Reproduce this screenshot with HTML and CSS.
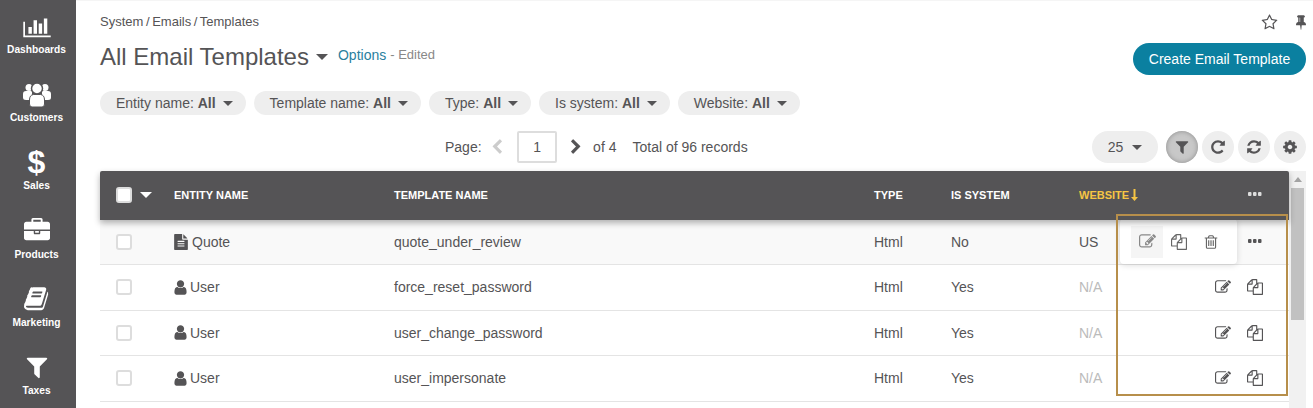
FILE: index.html
```html
<!DOCTYPE html>
<html lang="en">
<head>
<meta charset="utf-8">
<title>All Email Templates</title>
<link rel="stylesheet" href="styles.css">
</head>
<body>
<svg class="defs" aria-hidden="true">
  <symbol id="i-bars" viewBox="0 0 2048 1792"><path d="M640 896v512h-256v-512h256zm384-512v1024h-256v-1024h256zm1024 1152v128h-2048v-1152h128v1024h1920zm-640-896v768h-256v-768h256zm384-384v1152h-256v-1152h256z"/></symbol>
  <symbol id="i-case" viewBox="0 0 1792 1792"><path d="M640 256h512v-128h-512v128zm1152 640v480q0 66-47 113t-113 47h-1472q-66 0-113-47t-47-113v-480h672v160q0 26 19 45t45 19h320q26 0 45-19t19-45v-160h672zm-768 0v128h-256v-128h256zm768-480v384h-1792v-384q0-66 47-113t113-47h352v-160q0-40 28-68t68-28h576q40 0 68 28t28 68v160h352q66 0 113 47t47 113z"/></symbol>
  <symbol id="i-book" viewBox="0 0 1792 1792"><path d="M1639 478q40 57 18 129l-275 906q-19 64-76.500 107.500t-122.500 43.500h-923q-77 0-148.500-53.500t-99.500-131.500q-24-67-2-127 0-4 3-27t4-37q1-8-3-21.500t-3-19.500q2-11 8-21t16.500-23.500 16.500-23.500q23-38 45-91.500t30-91.500q3-10 .5-30t-.5-28q3-11 17-28t17-23q21-36 42-92t25-90q1-9-2.500-32t.5-28q4-13 22-30.500t22-22.500q19-26 42.500-84.500t27.500-96.500q1-8-3-25.500t-2-26.500q2-8 9-18t18-23 17-21q8-12 16.500-35.500t15-44.500 17-46 20.500-41.500 28-30 40-13 55 8.500l-1 3q45-10 61-10h761q74 0 114 56t18 130l-274 906q-36 119-71.500 153.500t-128.500 34.500h-869q-27 0-38 15-11 16-1 43 24 70 144 70h923q29 0 56-15.500t35-41.500l300-987q7-22 5-57 38 15 59 43zm-1064 2q-4 13 2 22.500t20 9.500h608q13 0 25.500-9.500t16.500-22.500l21-64q4-13-2-22.500t-20-9.500h-608q-13 0-25.500 9.500t-16.500 22.500zm-83 256q-4 13 2 22.500t20 9.500h608q13 0 25.500-9.500t16.500-22.500l21-64q4-13-2-22.500t-20-9.500h-608q-13 0-25.500 9.500t-16.500 22.500z"/></symbol>
  <symbol id="i-filter" viewBox="0 0 1792 1792"><path d="M1595 295q17 41-14 70l-493 493v742q0 42-39 59-13 5-25 5-27 0-45-19l-256-256q-19-19-19-45v-486l-493-493q-31-29-14-70 17-39 59-39h1280q42 0 59 39z"/></symbol>
  <symbol id="i-star" viewBox="0 0 1792 1792"><path d="M1201 1004l306-297-422-62-189-382-189 382-422 62 306 297-73 421 378-199 377 199zm527-357q0 22-26 48l-363 354 86 500q1 7 1 20 0 50-41 50-19 0-40-12l-449-236-449 236q-22 12-40 12-21 0-31.500-14.500t-10.500-35.500q0-6 2-20l86-500-364-354q-25-27-25-48 0-37 56-46l502-73 225-455q19-41 49-41t49 41l225 455 502 73q56 9 56 46z"/></symbol>
  <symbol id="i-pin" viewBox="0 0 1152 1792"><path d="M480 864v-448q0-14-9-23t-23-9-23 9-9 23v448q0 14 9 23t23 9 23-9 9-23zm672 352q0 26-19 45t-45 19h-429l-51 483q-2 12-10.500 20.500t-20.500 8.500h-1q-27 0-32-27l-76-485h-404q-26 0-45-19t-19-45q0-123 78.500-221.500t177.500-98.500v-512q-52 0-90-38t-38-90 38-90 90-38h640q52 0 90 38t38 90-38 90-90 38v512q99 0 177.500 98.500t78.500 221.500z"/></symbol>
  <symbol id="i-left" viewBox="0 0 1792 1792"><path d="M1427 301l-531 531 531 531q19 19 19 45t-19 45l-166 166q-19 19-45 19t-45-19l-742-742q-19-19-19-45t19-45l742-742q19-19 45-19t45 19l166 166q19 19 19 45t-19 45z"/></symbol>
  <symbol id="i-right" viewBox="0 0 1792 1792"><path d="M1363 877l-742 742q-19 19-45 19t-45-19l-166-166q-19-19-19-45t19-45l531-531-531-531q-19-19-19-45t19-45l166-166q19-19 45-19t45 19l742 742q19 19 19 45t-19 45z"/></symbol>
  <symbol id="i-repeat" viewBox="0 0 1792 1792"><path d="M1664 256v448q0 26-19 45t-45 19h-448q-42 0-59-40-17-39 14-69l138-138q-148-137-349-137-104 0-198.500 40.500t-163.500 109.500-109.500 163.500-40.500 198.500 40.500 198.500 109.500 163.500 163.500 109.500 198.500 40.500q119 0 225-52t179-147q7-10 23-12 15 0 25 9l137 138q9 8 9.500 20.500t-7.500 22.500q-109 132-264 204.500t-327 72.500q-156 0-298-61t-245-164-164-245-61-298 61-298 164-245 245-164 298-61q147 0 284.500 55.500t244.500 156.500l130-129q29-31 70-14 39 17 39 59z"/></symbol>
  <symbol id="i-refresh" viewBox="0 0 1792 1792"><path d="M1639 1056q0 5-1 7-64 268-268 434.500t-478 166.500q-146 0-282.500-55t-243.500-157l-129 129q-19 19-45 19t-45-19-19-45v-448q0-26 19-45t45-19h448q26 0 45 19t19 45-19 45l-137 137q71 66 161 102t187 36q134 0 250-65t186-179q11-17 53-117 8-23 30-23h192q13 0 22.500 9.500t9.500 22.500zm25-800v448q0 26-19 45t-45 19h-448q-26 0-45-19t-19-45 19-45l138-138q-148-137-349-137-134 0-250 65t-186 179q-11 17-53 117-8 23-30 23h-199q-13 0-22.500-9.500t-9.500-22.500v-7q65-268 270-434.500t480-166.500q146 0 284 55.500t245 156.500l130-129q19-19 45-19t45 19 19 45z"/></symbol>
  <symbol id="i-cog" viewBox="0 0 1792 1792"><path d="M1152 896q0-106-75-181t-181-75-181 75-75 181 75 181 181 75 181-75 75-181zm512-109v222q0 12-8 23t-20 13l-185 28q-19 54-39 91 35 50 107 138 10 12 10 25t-9 23q-27 37-99 108t-94 71q-12 0-26-9l-138-108q-44 23-91 38-16 136-29 186-7 28-36 28h-222q-14 0-24.500-8.500t-11.500-21.500l-28-184q-49-16-90-37l-141 107q-10 9-25 9-14 0-25-11-126-114-165-168-7-10-7-23 0-12 8-23 15-21 51-66.500t54-70.500q-27-50-41-99l-183-27q-13-2-21-12.500t-8-23.500v-222q0-12 8-23t19-13l186-28q14-46 39-92-40-57-107-138-10-12-10-24 0-10 9-23 26-36 98.500-107.500t94.500-71.500q13 0 26 10l138 107q44-23 91-38 16-136 29-186 7-28 36-28h222q14 0 24.500 8.500t11.500 21.500l28 184q49 16 90 37l142-107q9-9 24-9 13 0 25 10 129 119 165 170 7 8 7 22 0 12-8 23-15 21-51 66.500t-54 70.500q26 50 41 98l183 28q13 2 21 12.500t8 23.500z"/></symbol>
  <symbol id="i-edit" viewBox="0 0 1792 1792"><path d="M888 1184l116-116-152-152-116 116v56h96v96h56zm440-720q-16-16-33 1l-350 350q-17 17-1 33t33-1l350-350q17-17 1-33zm80 594v190q0 119-84.500 203.500t-203.500 84.500h-832q-119 0-203.500-84.500t-84.500-203.500v-832q0-119 84.500-203.500t203.500-84.500h832q63 0 117 25 15 7 18 23 3 17-9 29l-49 49q-14 14-32 8-23-6-45-6h-832q-66 0-113 47t-47 113v832q0 66 47 113t113 47h832q66 0 113-47t47-113v-126q0-13 9-22l64-64q15-15 35-7t20 29zm-96-738l288 288-672 672h-288v-288zm444 132l-92 92-288-288 92-92q28-28 68-28t68 28l152 152q28 28 28 68t-28 68z"/></symbol>
  <symbol id="i-copy" viewBox="0 0 1792 1792"><path d="M1696 384q40 0 68 28t28 68v1216q0 40-28 68t-68 28h-960q-40 0-68-28t-28-68v-288h-544q-40 0-68-28t-28-68v-672q0-40 20-88t48-76l408-408q28-28 76-48t88-20h416q40 0 68 28t28 68v328q68-40 128-40h416zm-544 213l-299 299h299v-299zm-640-384l-299 299h299v-299zm196 647l316-316v-416h-384v416q0 40-28 68t-68 28h-416v640h512v-256q0-40 20-88t48-76zm956 804v-1152h-384v416q0 40-28 68t-68 28h-416v640h896z"/></symbol>
  <symbol id="i-trash" viewBox="0 0 1792 1792"><path d="M704 736v576q0 14-9 23t-23 9h-64q-14 0-23-9t-9-23v-576q0-14 9-23t23-9h64q14 0 23 9t9 23zm256 0v576q0 14-9 23t-23 9h-64q-14 0-23-9t-9-23v-576q0-14 9-23t23-9h64q14 0 23 9t9 23zm256 0v576q0 14-9 23t-23 9h-64q-14 0-23-9t-9-23v-576q0-14 9-23t23-9h64q14 0 23 9t9 23zm128 724v-948h-896v948q0 22 7 40.500t14.500 27 10.500 8.500h832q3 0 10.500-8.500t14.500-27 7-40.500zm-672-1076h448l-48-117q-7-9-17-11h-317q-10 2-17 11zm928 32v64q0 14-9 23t-23 9h-96v948q0 83-47 143.500t-113 60.500h-832q-66 0-113-58.500t-47-141.500v-952h-96q-14 0-23-9t-9-23v-64q0-14 9-23t23-9h309l70-167q15-37 54-63t79-26h320q40 0 79 26t54 63l70 167h309q14 0 23 9t9 23z"/></symbol>
  <symbol id="i-user" viewBox="0 0 1792 1792"><path d="M1536 1399q0 109-62.500 187t-150.500 78h-854q-88 0-150.500-78t-62.500-187q0-85 8.500-160.500t31.500-152 58.500-131 94-89 134.500-34.500q131 128 313 128t313-128q76 0 134.500 34.500t94 89 58.500 131 31.500 152 8.500 160.500zm-256-887q0 159-112.500 271.500t-271.500 112.500-271.500-112.500-112.500-271.500 112.500-271.500 271.500-112.500 271.500 112.500 112.500 271.500z"/></symbol>
  <symbol id="i-file" viewBox="0 0 1792 1792"><path d="M1596 476q14 14 28 36h-472v-472q22 14 36 28zm-476 164h544v1056q0 40-28 68t-68 28h-1344q-40 0-68-28t-28-68v-1600q0-40 28-68t68-28h800v544q0 40 28 68t68 28zm160 736v-64q0-14-9-23t-23-9h-704q-14 0-23 9t-9 23v64q0 14 9 23t23 9h704q14 0 23-9t9-23zm0-256v-64q0-14-9-23t-23-9h-704q-14 0-23 9t-9 23v64q0 14 9 23t23 9h704q14 0 23-9t9-23zm0-256v-64q0-14-9-23t-23-9h-704q-14 0-23 9t-9 23v64q0 14 9 23t23 9h704q14 0 23-9t9-23z"/></symbol>
  <symbol id="i-people" viewBox="0 0 28 25"><circle cx="6" cy="5.500" r="3.500"/><circle cx="22" cy="5.500" r="3.500"/><path d="M0 12q0-3 3-3h6v6l-2 3H3q-3 0-3-2.500zM28 12q0-3-3-3h-6v6l2 3h4q3 0 3-2.500z"/><circle cx="14" cy="6.500" r="5.500" stroke="#555456" stroke-width="1.500"/><path d="M6.500 22v-4q0-5 4-5.500h7q4 .5 4 5.500v4q0 3-2.500 3h-10q-2.500 0-2.500-3z" stroke="#555456" stroke-width="1"/></symbol>
  <symbol id="i-caret" viewBox="0 0 10 5"><path d="M0 0h10L5 5z"/></symbol>
  <symbol id="i-dots" viewBox="0 0 14 4"><rect x="0" y="0" width="3.500" height="4" rx="1"/><rect x="5" y="0" width="3.500" height="4" rx="1"/><rect x="10" y="0" width="3.500" height="4" rx="1"/></symbol>
  <symbol id="i-sort" viewBox="0 0 7 12"><path d="M2.500 0h2v8H7l-3.500 4L0 8h2.500z"/></symbol>
</svg>

<div class="app">
  <nav class="sidebar">
    <a class="nav-item"><svg class="nav-ico bars"><use href="#i-bars"/></svg><span>Dashboards</span></a>
    <a class="nav-item"><svg class="nav-ico people"><use href="#i-people"/></svg><span>Customers</span></a>
    <a class="nav-item"><span class="dollar">$</span><span>Sales</span></a>
    <a class="nav-item"><svg class="nav-ico"><use href="#i-case"/></svg><span>Products</span></a>
    <a class="nav-item"><svg class="nav-ico"><use href="#i-book"/></svg><span>Marketing</span></a>
    <a class="nav-item"><svg class="nav-ico"><use href="#i-filter"/></svg><span>Taxes</span></a>
  </nav>

  <main class="main">
    <div class="crumb-row">
      <div class="crumbs">System / Emails / Templates</div>
      <div class="page-tools">
        <svg class="star"><use href="#i-star"/></svg>
        <svg class="pin"><use href="#i-pin"/></svg>
      </div>
    </div>

    <div class="title-row">
      <h1 class="title">All Email Templates</h1>
      <svg class="caret title-caret"><use href="#i-caret"/></svg>
      <a class="options">Options</a>
      <span class="edited">- Edited</span>
      <button class="create">Create Email Template</button>
    </div>

    <div class="filters">
      <div class="pill">Entity name: <b>All</b><svg class="caret"><use href="#i-caret"/></svg></div>
      <div class="pill">Template name: <b>All</b><svg class="caret"><use href="#i-caret"/></svg></div>
      <div class="pill">Type: <b>All</b><svg class="caret"><use href="#i-caret"/></svg></div>
      <div class="pill">Is system: <b>All</b><svg class="caret"><use href="#i-caret"/></svg></div>
      <div class="pill">Website: <b>All</b><svg class="caret"><use href="#i-caret"/></svg></div>
    </div>

    <div class="toolbar">
      <div class="pager">
        <span class="page-label">Page:</span>
        <svg class="chev off"><use href="#i-left"/></svg>
        <div class="page-input">1</div>
        <svg class="chev"><use href="#i-right"/></svg>
        <span class="of">of 4</span>
        <span class="total">Total of 96 records</span>
      </div>
      <div class="tools">
        <div class="per-page">25<svg class="caret"><use href="#i-caret"/></svg></div>
        <button class="round active"><svg><use href="#i-filter"/></svg></button>
        <button class="round"><svg><use href="#i-repeat"/></svg></button>
        <button class="round"><svg><use href="#i-refresh"/></svg></button>
        <button class="round"><svg><use href="#i-cog"/></svg></button>
      </div>
    </div>

    <div class="grid-wrap">
      <div class="grid">
        <div class="row head">
          <div class="cell sel"><span class="check head-check"></span><svg class="caret white"><use href="#i-caret"/></svg></div>
          <div class="cell">Entity name</div>
          <div class="cell">Template name</div>
          <div class="cell">Type</div>
          <div class="cell">Is system</div>
          <div class="cell sorted">Website<svg class="sort"><use href="#i-sort"/></svg></div>
          <div class="cell acts"><svg class="dots"><use href="#i-dots"/></svg></div>
        </div>

        <div class="row first">
          <div class="cell sel"><span class="check"></span></div>
          <div class="cell"><svg class="ent file"><use href="#i-file"/></svg>Quote</div>
          <div class="cell">quote_under_review</div>
          <div class="cell">Html</div>
          <div class="cell">No</div>
          <div class="cell">US</div>
          <div class="cell acts">
            <svg class="dots"><use href="#i-dots"/></svg>
            <div class="popover">
              <span class="pop-btn hover"><svg><use href="#i-edit"/></svg></span>
              <span class="pop-btn"><svg><use href="#i-copy"/></svg></span>
              <span class="pop-btn"><svg><use href="#i-trash"/></svg></span>
            </div>
          </div>
        </div>

        <div class="row">
          <div class="cell sel"><span class="check"></span></div>
          <div class="cell"><svg class="ent"><use href="#i-user"/></svg>User</div>
          <div class="cell">force_reset_password</div>
          <div class="cell">Html</div>
          <div class="cell">Yes</div>
          <div class="cell na">N/A</div>
          <div class="cell acts"><svg class="act"><use href="#i-edit"/></svg><svg class="act"><use href="#i-copy"/></svg></div>
        </div>

        <div class="row">
          <div class="cell sel"><span class="check"></span></div>
          <div class="cell"><svg class="ent"><use href="#i-user"/></svg>User</div>
          <div class="cell">user_change_password</div>
          <div class="cell">Html</div>
          <div class="cell">Yes</div>
          <div class="cell na">N/A</div>
          <div class="cell acts"><svg class="act"><use href="#i-edit"/></svg><svg class="act"><use href="#i-copy"/></svg></div>
        </div>

        <div class="row">
          <div class="cell sel"><span class="check"></span></div>
          <div class="cell"><svg class="ent"><use href="#i-user"/></svg>User</div>
          <div class="cell">user_impersonate</div>
          <div class="cell">Html</div>
          <div class="cell">Yes</div>
          <div class="cell na">N/A</div>
          <div class="cell acts"><svg class="act"><use href="#i-edit"/></svg><svg class="act"><use href="#i-copy"/></svg></div>
        </div>

        <div class="frame"></div>
      </div>
      <div class="scrollbar"><span class="scroll-up"></span><span class="thumb"></span></div>
    </div>
  </main>
</div>
</body>
</html>
```
FILE: styles.css
```css
* { box-sizing: border-box; }

html, body {
  margin: 0;
  height: 100%;
  overflow: hidden;
  background: #fff;
  color: #555456;
  font: 14px/20px "Liberation Sans", Arial, sans-serif;
}

.defs { display: none; }

svg { fill: currentColor; display: block; }

.app { display: flex; height: 408px; }

/* sidebar */
.sidebar {
  width: 76px;
  flex: none;
  padding-right: 3px;
  background: #555456;
  color: #fff;
  overflow: hidden;
}
.nav-item {
  height: 68.2px;
  display: flex;
  flex-direction: column;
  align-items: center;
  justify-content: flex-end;
  padding-bottom: 11px;
  font-size: 10.2px;
  line-height: 14px;
  font-weight: bold;
  gap: 4px;
}
.nav-item:first-child { height: 68px; }
.nav-ico { width: 26px; height: 26px; }
.nav-ico.bars { width: 28px; height: 24px; }
.nav-ico.people { width: 28px; height: 25px; }
.dollar { font-size: 32px; line-height: 26px; height: 26px; font-weight: bold; }

/* main */
.main { flex: 1; min-width: 0; padding: 12px 7px 0 24px; box-shadow: inset 0 1px 0 #f5f5f5; }

.crumb-row { display: flex; justify-content: space-between; height: 20px; }
.crumbs { font-size: 13px; word-spacing: -1px; }
.page-tools { display: flex; align-items: center; gap: 18px; }
.star { width: 17px; height: 17px; }
.pin { width: 10px; height: 16px; color: #555456; }

.title-row { display: flex; align-items: center; height: 32px; margin-top: 9px; position: relative; }
.title { margin: 0; font-size: 24px; line-height: 32px; font-weight: normal; }
.caret { width: 10px; height: 5px; flex: none; }
.title-caret { width: 12px; height: 6px; margin: 0 10px 0 7px; }
.options { color: #2a7f9e; margin-top: -4px; }
.edited { color: #888; margin: -4px 0 0 4px; font-size: 13px; }
.create {
  margin: 4px 0 0 auto;
  width: 173px;
  height: 32px;
  border: 0;
  border-radius: 16px;
  background: #0b80a0;
  color: #fff;
  font: 14px "Liberation Sans", Arial, sans-serif;
}

.filters { display: flex; gap: 8px; margin-top: 18px; }
.pill {
  display: flex;
  align-items: center;
  height: 24px;
  padding: 0 13px 0 16px;
  border-radius: 12px;
  background: #eee;
  white-space: pre;
}
.pill b { margin-right: 7px; }

.toolbar { display: flex; align-items: center; height: 32px; margin-top: 16px; }
.pager { display: flex; align-items: center; margin-left: 345px; }
.chev { width: 16px; height: 16px; margin: 0 9px 0 11px; color: #555456; }
.chev.off { color: #ccc; margin: 0 12.5px 0 7px; }
.page-input {
  width: 40px;
  height: 32px;
  border: 2px solid #ddd;
  border-radius: 2px;
  display: flex;
  align-items: center;
  justify-content: center;
}
.of { margin-right: 16px; }
.tools { display: flex; align-items: center; gap: 4px; margin-left: auto; }
.per-page {
  width: 66px;
  height: 32px;
  border-radius: 16px;
  background: #eee;
  display: flex;
  align-items: center;
  justify-content: center;
  gap: 9px;
  margin-right: 4px;
}
.round {
  width: 32px;
  height: 32px;
  padding: 0;
  border: 0;
  border-radius: 50%;
  background: #eee;
  color: #555456;
  display: flex;
  align-items: center;
  justify-content: center;
}
.round svg { width: 16px; height: 16px; }
.round.active { background: #c8c8c8; box-shadow: inset 0 0 5px #8d8d8d; }

/* grid */
.grid-wrap { display: flex; margin-top: 8px; }
.grid { position: relative; flex: 1; min-width: 0; }
.row {
  display: grid;
  grid-template-columns: 74px 220px 480px 77px 128px 94px 116px;
  align-items: center;
  height: 45.5px;
  border-bottom: 1px solid #e4e4e4;
}
.cell { display: flex; align-items: center; white-space: nowrap; }
.row.first { background: #f9f9f9; height: 45px; }
.head {
  height: 49px;
  padding-bottom: 2px;
  background: #555456;
  color: #fff;
  border: 0;
  border-radius: 2px 2px 0 0;
  font-size: 11px;
  font-weight: bold;
  text-transform: uppercase;
  position: relative;
  z-index: 2;
  box-shadow: 0 3px 6px rgba(0, 0, 0, .3);
}
.sel { padding-left: 16px; gap: 8px; }
.sel .caret { width: 12px; height: 6px; }
.check {
  width: 16px;
  height: 16px;
  background: #fff;
  border: 2px solid #ddd;
  border-radius: 3px;
}
.white { color: #fff; }
.sorted { color: #f6c544; gap: 2px; }
.sort { width: 7px; height: 12px; }
.acts { position: relative; justify-content: flex-end; padding-right: 26px; height: 100%; }
.dots { width: 14px; height: 4px; flex: none; }
.first .dots { margin: 0 1px 2px 0; }
.head .dots { margin: 0 1px 1px 0; color: #ddd; }
.na { color: #bbb; }
.ent { width: 17px; height: 17px; margin: 0 1.5px 0 -2.5px; }
.ent.file { width: 16px; height: 16px; margin: 0 3px 0 -1px; }
.act { width: 16px; height: 16px; margin-right: 16px; }
.act:last-child { margin-right: 0; }

.popover {
  position: absolute;
  top: -1px;
  left: -53px;
  width: 117px;
  height: 45px;
  background: #fff;
  border-radius: 4px;
  box-shadow: 0 1px 6px rgba(0, 0, 0, .15);
  display: flex;
  align-items: center;
  padding-left: 11px;
}
.pop-btn { width: 32px; height: 32px; display: flex; align-items: center; justify-content: center; color: #666; }
.pop-btn svg { width: 16px; height: 16px; }
.pop-btn.hover { background: #f5f5f5; color: #888; }
.pop-btn.hover svg { width: 17px; height: 17px; }

.frame {
  position: absolute;
  left: 1016px;
  top: 43px;
  width: 172px;
  height: 182px;
  border: 2px solid #b78f4b;
  z-index: 3;
  pointer-events: none;
}

.scrollbar { width: 17px; flex: none; height: 237px; background: #f1f1f1; padding: 6px 2px 0; display: flex; flex-direction: column; align-items: center; }
.scroll-up { width: 0; height: 0; border: 4px solid transparent; border-top: 0; border-bottom: 5px solid #a3a3a3; }
.thumb { width: 13px; height: 132px; background: #c1c1c1; margin-top: 6px; }
```
